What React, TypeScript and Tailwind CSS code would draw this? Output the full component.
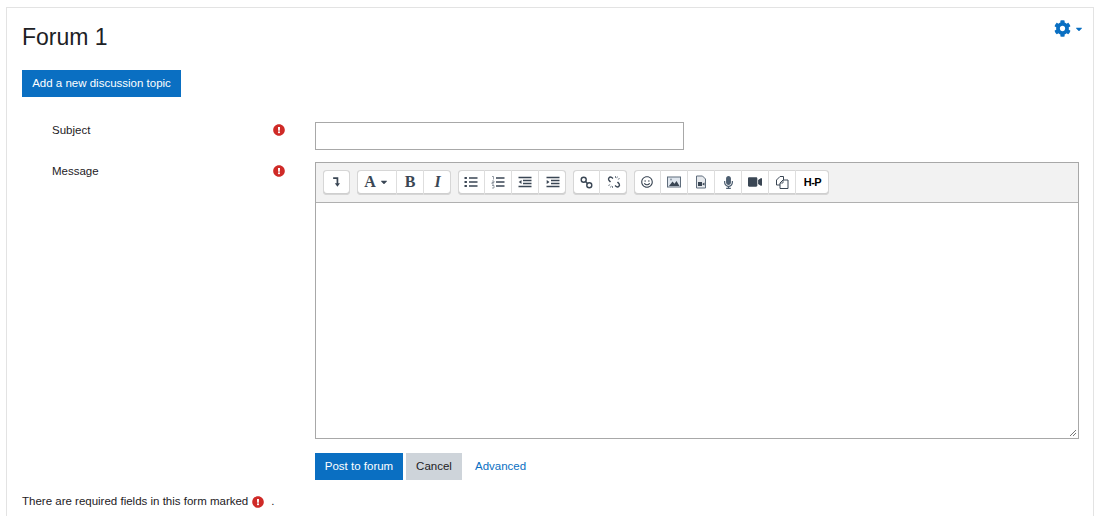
import { ReactNode } from "react"
import { FaCaretDown, FaCog, FaExclamationCircle, FaMicrophone, FaRegSmile, FaVideo } from "react-icons/fa"

const iconDark = "#3a4654"

function ToolButton({ children, wide }: { children: ReactNode; wide?: string }) {
  return (
    <button className={`flex h-[25px] items-center justify-center border-r border-[#dedede] pb-[1px] text-[#3a4654] last:border-r-0 ${wide ?? "w-[27px]"}`}>
      {children}
    </button>
  )
}

function ToolGroup({ children }: { children: ReactNode }) {
  return (
    <div className="flex h-[25px] rounded-[4px] bg-white shadow-[inset_0_0_0_1px_#d6d6d6,inset_0_-1px_0_1px_#cfcfcf]">
      {children}
    </div>
  )
}

function Icon({ children, size = 14 }: { children: ReactNode; size?: number }) {
  return (
    <svg width={size} height={size} viewBox="0 0 14 14" fill="none">
      {children}
    </svg>
  )
}

function ListIcon({ numbered }: { numbered?: boolean }) {
  return (
    <Icon>
      <path d="M5 3h8.5M5 7h8.5M5 11h8.5" stroke={iconDark} strokeWidth="1.6" />
      {numbered ? (
        <path d="M1 1.5h1.5v3M1 6h2v1.5H1V9h2M1 10.5h2V13H1" stroke="#6b7682" strokeWidth=".7" />
      ) : (
        <path d="M.5 3h2.4M.5 7h2.4M.5 11h2.4" stroke={iconDark} strokeWidth="2.2" />
      )}
    </Icon>
  )
}

function IndentIcon({ out }: { out?: boolean }) {
  return (
    <Icon>
      <path d="M.5 2.5h13M5 5.5h8.5M5 8.5h8.5M.5 11.5h13" stroke={iconDark} strokeWidth="1.5" />
      <path d={out ? "M3.5 5 .7 7l2.8 2z" : "M.7 5 3.5 7 .7 9z"} fill={iconDark} />
    </Icon>
  )
}

function Required() {
  return <FaExclamationCircle className="text-[#cf2a27]" size={12} />
}

export default function App() {
  return (
    <div className="h-[516px] overflow-hidden bg-white px-[6px] pt-[7px] font-['Liberation_Sans',sans-serif] text-[11.5px] text-[#1d2125]">
      <div className="relative h-[520px] border border-[#e3e3e3] pl-[15px] pt-[15px]">
        <div className="absolute right-[9px] top-[12px] flex items-center gap-[3px] text-[#0a6fc2]">
          <FaCog size={17} />
          <FaCaretDown size={10} />
        </div>

        <h2 className="text-[23px] leading-[29px]">Forum 1</h2>

        <button className="mt-[18px] flex h-[27px] w-[159px] items-center justify-center bg-[#0a6fc2] text-white">
          Add a new discussion topic
        </button>

        <div className="mt-[25px] flex">
          <div className="w-[293px] shrink-0 pl-[30px]">
            <div className="flex h-[16px] w-[233px] items-center justify-between">
              <span className="pt-[2px]">Subject</span>
              <Required />
            </div>
          </div>
          <input className="h-[28px] w-[369px] border border-[#a8a8a8] bg-white outline-none" />
        </div>

        <div className="mt-[12px] flex">
          <div className="w-[293px] shrink-0 pl-[30px] pt-[1px]">
            <div className="flex h-[16px] w-[233px] items-center justify-between">
              <span className="pt-[2px]">Message</span>
              <Required />
            </div>
          </div>

          <div className="relative h-[277px] w-[764px] shrink-0 border border-[#a8a8a8]">
            <div className="flex h-[40px] items-start gap-[7px] border-b border-[#b0b0b0] bg-[#f2f2f2] pl-[7px] pt-[7px]">
              <ToolGroup>
                <ToolButton>
                  <Icon size={12}>
                    <path d="M2.5 2.5h5v8" stroke={iconDark} strokeWidth="2" />
                    <path d="M4.5 8.5h6L7.5 12.5z" fill={iconDark} />
                  </Icon>
                </ToolButton>
              </ToolGroup>
              <ToolGroup>
                <ToolButton wide="w-[40px] gap-[3px]">
                  <span className="font-['Liberation_Serif',serif] text-[16px] font-bold leading-none">A</span>
                  <FaCaretDown size={10} />
                </ToolButton>
                <ToolButton>
                  <span className="font-['Liberation_Serif',serif] text-[16px] font-bold leading-none">B</span>
                </ToolButton>
                <ToolButton>
                  <span className="font-['Liberation_Serif',serif] text-[16px] font-bold italic leading-none">I</span>
                </ToolButton>
              </ToolGroup>
              <ToolGroup>
                <ToolButton><ListIcon /></ToolButton>
                <ToolButton><ListIcon numbered /></ToolButton>
                <ToolButton><IndentIcon out /></ToolButton>
                <ToolButton><IndentIcon /></ToolButton>
              </ToolGroup>
              <ToolGroup>
                <ToolButton>
                  <Icon size={13}>
                    <circle cx="4" cy="4" r="2.7" stroke={iconDark} strokeWidth="1.5" />
                    <circle cx="10" cy="10" r="2.7" stroke={iconDark} strokeWidth="1.5" />
                    <path d="M5.5 5.5l3 3" stroke={iconDark} strokeWidth="1.5" />
                  </Icon>
                </ToolButton>
                <ToolButton>
                  <Icon size={14}>
                    <path d="M6 3.5 4.5 2.3a2 2 0 0 0-2.6 2.9L3.5 7M8 10.5l1.5 1.2a2 2 0 0 0 2.6-2.9L10.5 7" stroke={iconDark} strokeWidth="1.4" />
                    <path d="M8.5 1v2M10.5 1.5 9.7 3.2M12.7 3.5l-1.8.8M1.3 10.5l1.8-.8M5.5 13v-2M3.5 12.5l.8-1.7" stroke="#6b7682" strokeWidth=".9" />
                  </Icon>
                </ToolButton>
              </ToolGroup>
              <ToolGroup>
                <ToolButton><FaRegSmile size={12} /></ToolButton>
                <ToolButton>
                  <Icon>
                    <rect x=".5" y="2" width="13" height="10" fill="#dfe6ee" stroke="#5f6d7c" />
                    <path d="M2 11l3.5-4.5 2 2.2L9.5 6l3 5z" fill={iconDark} />
                    <circle cx="4" cy="4.5" r="1" fill="#8c98a5" />
                  </Icon>
                </ToolButton>
                <ToolButton>
                  <Icon>
                    <path d="M2.5 1h6l3 3v9h-9z" fill="#e6e9ed" stroke="#5f6d7c" />
                    <path d="M4 7h4v4H4zM8.5 8.8 10.5 7.5v3L8.5 9.4z" fill={iconDark} />
                  </Icon>
                </ToolButton>
                <ToolButton><FaMicrophone className="text-[#4d5e70]" size={13} /></ToolButton>
                <ToolButton><FaVideo size={14} /></ToolButton>
                <ToolButton>
                  <Icon>
                    <path d="M5 10H1.5V5L5 1.5h3.5V5" stroke={iconDark} strokeWidth="1" />
                    <path d="M5 8l3-3h5v8.5H5z" fill="#fff" stroke={iconDark} strokeWidth="1" />
                    <path d="M8 5v3H5" stroke={iconDark} strokeWidth=".8" />
                  </Icon>
                </ToolButton>
                <ToolButton wide="w-[33px]">
                  <span className="text-[11px] font-black leading-none tracking-[-0.5px] text-black">H-P</span>
                </ToolButton>
              </ToolGroup>
            </div>
            <svg className="absolute bottom-[1px] right-[1px]" width="8" height="8" viewBox="0 0 8 8">
              <path d="M1 7 7 1M4 7 7 4" stroke="#777" strokeWidth="1" />
            </svg>
          </div>
        </div>

        <div className="ml-[293px] mt-[14px] flex items-center">
          <button className="h-[27px] w-[88px] bg-[#0a6fc2] text-white">Post to forum</button>
          <button className="ml-[3px] h-[27px] w-[56px] bg-[#ced4da] text-[#1d2125]">Cancel</button>
          <a className="ml-[13px] text-[#0a6fc2]">Advanced</a>
        </div>

        <div className="mt-[14px] flex h-[16px] items-center">
          <span>There are required fields in this form marked</span>
          <span className="ml-[4px]"><Required /></span>
          <span className="ml-[7px]">.</span>
        </div>
      </div>
    </div>
  )
}
